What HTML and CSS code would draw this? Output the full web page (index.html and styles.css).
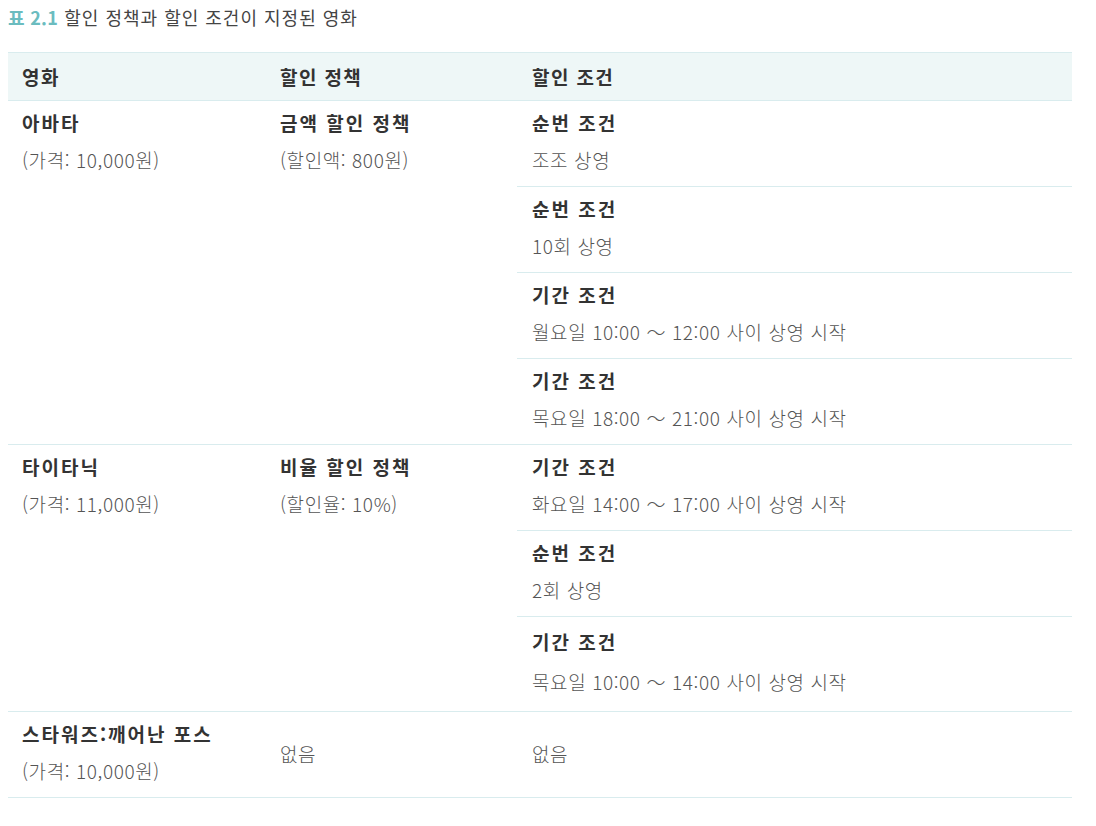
FILE: index.html
```html
<!DOCTYPE html>
<html lang="ko">
<head>
<meta charset="UTF-8" />
<title>표 2.1 할인 정책과 할인 조건이 지정된 영화</title>
<link rel="stylesheet" href="styles.css">
</head>
<body>

<div class="caption"><span class="caption-no">표 2.1</span> 할인 정책과 할인 조건이 지정된 영화</div>

<div class="movie-table">
  <div class="row head">
    <div class="cell">영화</div>
    <div class="cell">할인 정책</div>
    <div class="cell cond-head">할인 조건</div>
  </div>

  <div class="row">
    <div class="cell">
      <div class="label">아바타</div>
      <div class="note">(가격: 10,000원)</div>
    </div>
    <div class="cell">
      <div class="label">금액 할인 정책</div>
      <div class="note">(할인액: 800원)</div>
    </div>
    <div class="conds">
      <div class="cond"><div class="label">순번 조건</div><div class="note">조조 상영</div></div>
      <div class="cond"><div class="label">순번 조건</div><div class="note">10회 상영</div></div>
      <div class="cond"><div class="label">기간 조건</div><div class="note">월요일 10:00 ～ 12:00 사이 상영 시작</div></div>
      <div class="cond"><div class="label">기간 조건</div><div class="note">목요일 18:00 ～ 21:00 사이 상영 시작</div></div>
    </div>
  </div>

  <div class="row">
    <div class="cell">
      <div class="label">타이타닉</div>
      <div class="note">(가격: 11,000원)</div>
    </div>
    <div class="cell">
      <div class="label">비율 할인 정책</div>
      <div class="note">(할인율: 10%)</div>
    </div>
    <div class="conds">
      <div class="cond"><div class="label">기간 조건</div><div class="note">화요일 14:00 ～ 17:00 사이 상영 시작</div></div>
      <div class="cond"><div class="label">순번 조건</div><div class="note">2회 상영</div></div>
      <div class="cond tall"><div class="label">기간 조건</div><div class="note">목요일 10:00 ～ 14:00 사이 상영 시작</div></div>
    </div>
  </div>

  <div class="row">
    <div class="cell">
      <div class="label">스타워즈:깨어난 포스</div>
      <div class="note">(가격: 10,000원)</div>
    </div>
    <div class="cell middle note">없음</div>
    <div class="cell middle note cond-none">없음</div>
  </div>
</div>

</body>
</html>
```

FILE: styles.css
```css
body {
  margin: 0;
  padding: 5px 24px 0 8px;
  font-family: "Noto Sans CJK KR", "Noto Sans", sans-serif;
  color: #333;
  background: #fff;
}
.caption {
  font-size: 18px;
  line-height: 24px;
  letter-spacing: 1px;
  color: #444;
  margin-bottom: 23px;
}
.caption-no {
  color: #6bbcbf;
  font-weight: bold;
  letter-spacing: 0.3px;
}
.movie-table {
  border-bottom: 1px solid #d9ecee;
}
.row {
  display: grid;
  grid-template-columns: 258px 251px 1fr;
  border-top: 1px solid #d9ecee;
}
.row.head {
  background: #eef7f7;
  height: 47px;
  align-items: center;
  font-size: 19px;
  font-weight: bold;
  color: #333;
  letter-spacing: 1.4px;
}
.row.head .cell {
  padding-top: 0;
  padding-bottom: 0;
}
.cell {
  padding: 3px 14px 8px;
}
.cond-head {
  padding-left: 15px;
}
.cell.middle {
  align-self: center;
  padding-top: 0;
  padding-bottom: 2px;
}
.cond-none {
  padding-left: 15px;
}
.conds {
  display: flex;
  flex-direction: column;
}
.cond {
  padding: 3px 15px 8px;
  height: 74px;
}
.cond.tall {
  padding-top: 6px;
  height: 80px;
}
.cond.tall .note {
  margin-top: 3px;
}
.cond + .cond {
  border-top: 1px solid #d9ecee;
}
.label {
  font-size: 19px;
  line-height: 37px;
  font-weight: bold;
  letter-spacing: 2px;
  color: #333;
}
.note {
  font-size: 19px;
  line-height: 37px;
  font-weight: 300;
  letter-spacing: 0.6px;
  color: #555;
}
```
